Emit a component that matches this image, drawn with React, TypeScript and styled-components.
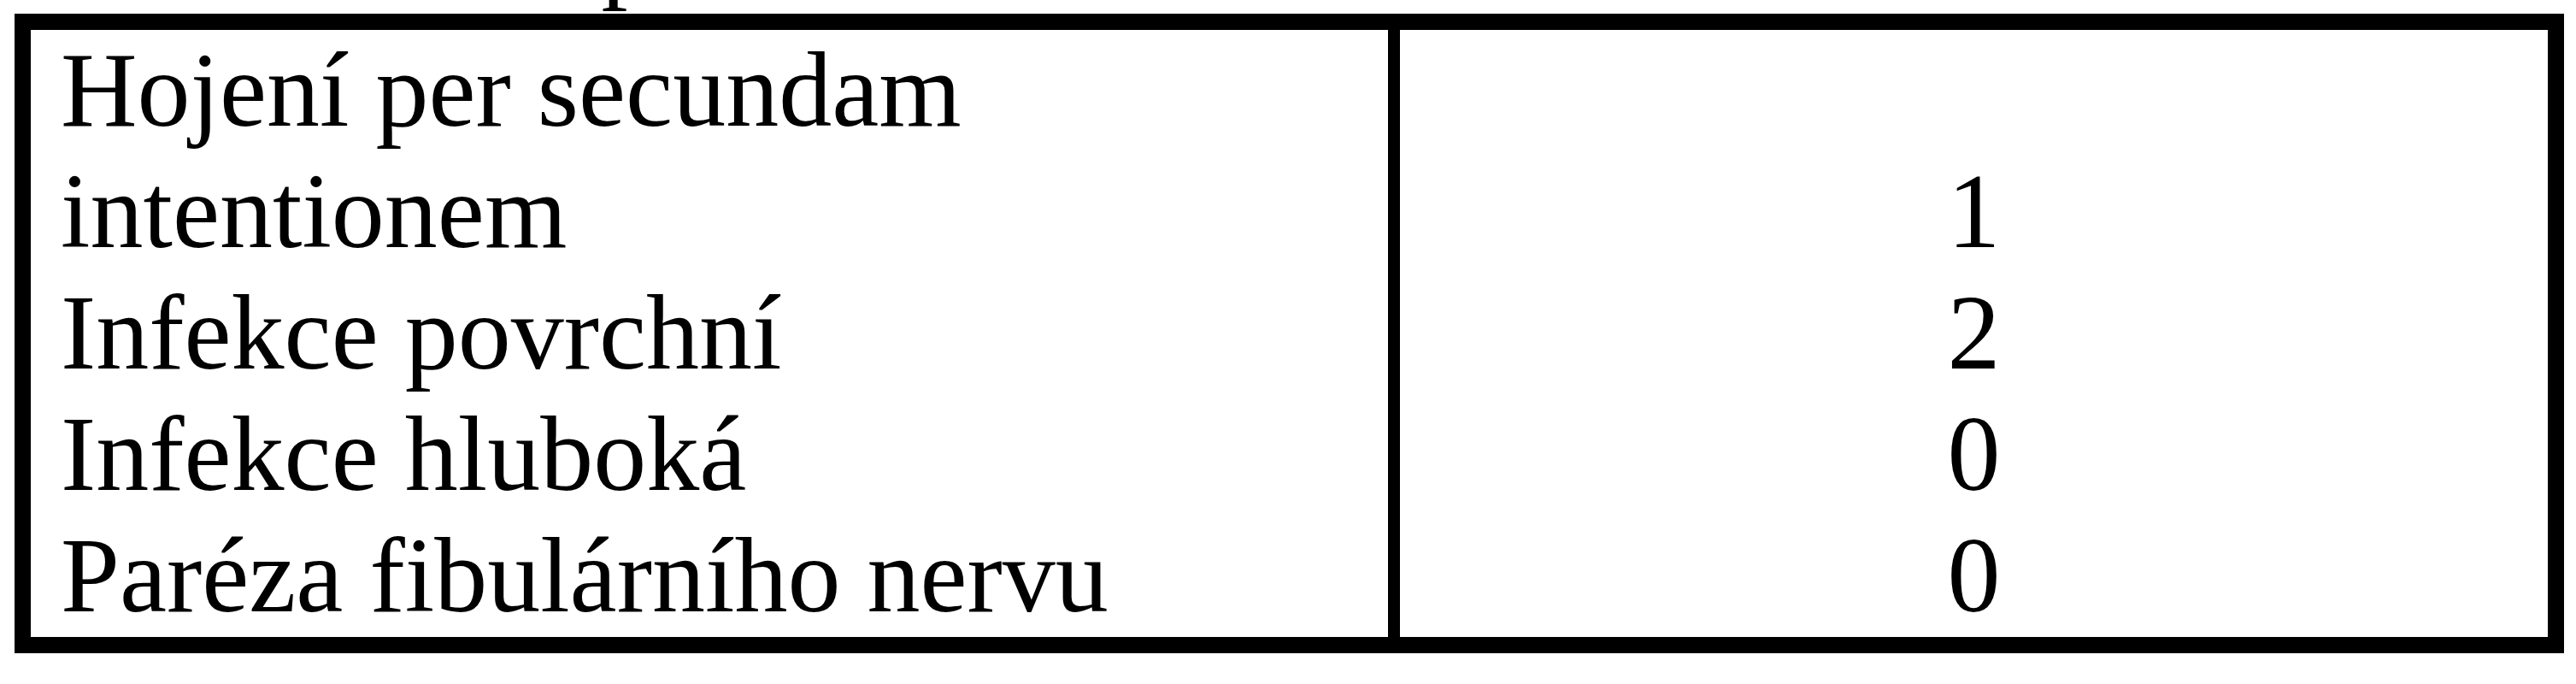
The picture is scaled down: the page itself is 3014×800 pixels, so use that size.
import React from 'react';
import styled, { createGlobalStyle } from 'styled-components';

interface ComplicationRow {
  label: string;
  count: number;
}

const rows: ComplicationRow[] = [
  { label: 'Hojení per secundam intentionem', count: 1 },
  { label: 'Infekce povrchní', count: 2 },
  { label: 'Infekce hluboká', count: 0 },
  { label: 'Paréza fibulárního nervu', count: 0 },
];

const GlobalStyle = createGlobalStyle`
  html, body {
    margin: 0;
    padding: 0;
    background: #ffffff;
  }

  body {
    font-family: "Liberation Serif", "Times New Roman", serif;
    color: #000000;
    overflow: hidden;
  }
`;

// the page is a crop of a scaled document, the caption line sits just above the view
const Page = styled.div`
  margin-top: -126px;
  padding-left: 17px;
  font-size: 124px;
  line-height: normal;
`;

const Caption = styled.p`
  margin: 0;
  padding-left: 65px;
  white-space: nowrap;
`;

const Table = styled.div`
  display: grid;
  grid-template-columns: 1602px 1343px;
  width: max-content;
  border: 19px solid #000000;
`;

const LabelCell = styled.div`
  padding: 0 35px;
  border-right: 14px solid #000000;
`;

const CountCell = styled.div`
  display: flex;
  align-items: flex-end;
  justify-content: center;
`;

const App: React.FC = () => {
  return (
    <>
      <GlobalStyle />
      <Page>
        <Caption>Tab. 3: Komplikace</Caption>
        <Table>
          {rows.map((row) => (
            <React.Fragment key={row.label}>
              <LabelCell>{row.label}</LabelCell>
              <CountCell>{row.count}</CountCell>
            </React.Fragment>
          ))}
        </Table>
      </Page>
    </>
  );
};

export default App;
